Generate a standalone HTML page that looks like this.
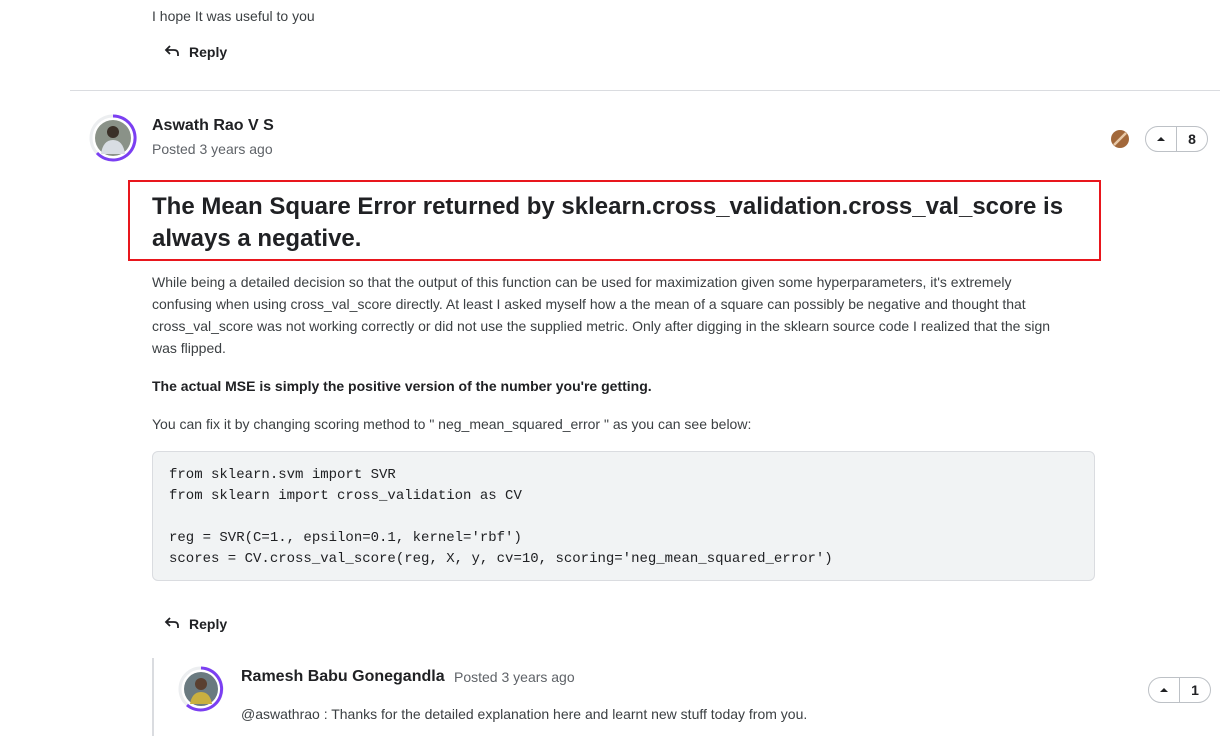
<!DOCTYPE html>
<html><head><style>
body{margin:0;width:1220px;height:736px;background:#fff;font-family:"Liberation Sans",sans-serif;color:#202124;position:relative;overflow:hidden}
.a{position:absolute;white-space:nowrap}
.t{font-size:14px;color:#3c4043}
.reply{font-size:14px;font-weight:bold;color:#202124}
.vote{position:absolute;border:1px solid #bdc1c6;border-radius:14px;height:24px;display:flex;align-items:center;font-size:14px;font-weight:bold}
.vote .u{width:30px;text-align:center;border-right:1px solid #bdc1c6;height:24px;display:flex;align-items:center;justify-content:center}
.vote .n{width:30px;text-align:center}
</style></head><body>
<div class="a t" style="left:152px;top:6px;line-height:20px">I hope It was useful to you</div>
<svg class="a" style="left:164px;top:44px" width="16" height="14" viewBox="0 0 16 14"><path d="M6 2 L2 6 L6 10 M2 6 H10 Q14 6 14 10 V12" fill="none" stroke="#202124" stroke-width="1.8"/></svg>
<div class="a reply" style="left:189px;top:43px;line-height:18px">Reply</div>
<div class="a" style="left:70px;top:90px;width:1150px;height:1px;background:#dadce0"></div>

<svg class="a" style="left:89px;top:114px" width="48" height="48" viewBox="0 0 48 48"><circle cx="24" cy="24" r="22" fill="none" stroke="#eceef0" stroke-width="3"/><path d="M24 2 A22 22 0 1 1 8 39" fill="none" stroke="#7b3ff2" stroke-width="3"/><circle cx="24" cy="24" r="18" fill="#8a9288"/><circle cx="24" cy="18" r="6" fill="#3a3028"/><path d="M12 40 Q14 26 24 26 Q34 26 36 40Z" fill="#d8dde3"/></svg>
<div class="a" style="left:152px;top:116px;font-size:16px;font-weight:bold;line-height:20px">Aswath Rao V S</div>
<div class="a" style="left:152px;top:140px;font-size:14px;color:#5f6368;line-height:18px">Posted 3 years ago</div>
<svg class="a" style="left:1110px;top:129px" width="20" height="20"><circle cx="10" cy="10" r="9" fill="#a2683a"/><path d="M4 16 L16 4" stroke="#e8c9a8" stroke-width="2.5"/></svg>
<div class="vote" style="left:1145px;top:126px"><div class="u"><svg width="10" height="6"><path d="M1 5 L5 1 L9 5Z" fill="#202124"/></svg></div><div class="n">8</div></div>

<div class="a" style="left:128px;top:180px;width:969px;height:77px;border:2px solid #e8161d"></div>
<div class="a" style="left:152px;top:191px;font-size:24px;font-weight:bold;line-height:32px;white-space:normal;width:940px">The Mean Square Error returned by sklearn.cross_validation.cross_val_score is always a negative.</div>

<div class="a t" style="left:152px;top:271px;line-height:22px;white-space:normal;width:905px">While being a detailed decision so that the output of this function can be used for maximization given some hyperparameters, it's extremely confusing when using cross_val_score directly. At least I asked myself how a the mean of a square can possibly be negative and thought that cross_val_score was not working correctly or did not use the supplied metric. Only after digging in the sklearn source code I realized that the sign was flipped.</div>
<div class="a" style="left:152px;top:375px;font-size:14px;font-weight:bold;line-height:22px">The actual MSE is simply the positive version of the number you're getting.</div>
<div class="a t" style="left:152px;top:413px;line-height:22px">You can fix it by changing scoring method to " neg_mean_squared_error " as you can see below:</div>
<div class="a" style="left:152px;top:451px;width:941px;height:128px;background:#f1f3f4;border:1px solid #dadce0;border-radius:6px"></div>
<pre class="a" style="left:169px;top:465px;margin:0;font-family:'Liberation Mono',monospace;font-size:14px;line-height:21px;color:#202124;white-space:pre">from sklearn.svm import SVR
from sklearn import cross_validation as CV

reg = SVR(C=1., epsilon=0.1, kernel='rbf')
scores = CV.cross_val_score(reg, X, y, cv=10, scoring='neg_mean_squared_error')</pre>

<svg class="a" style="left:164px;top:616px" width="16" height="14" viewBox="0 0 16 14"><path d="M6 2 L2 6 L6 10 M2 6 H10 Q14 6 14 10 V12" fill="none" stroke="#202124" stroke-width="1.8"/></svg>
<div class="a reply" style="left:189px;top:615px;line-height:18px">Reply</div>

<div class="a" style="left:152px;top:658px;width:2px;height:78px;background:#dadce0"></div>
<svg class="a" style="left:178px;top:666px" width="46" height="46" viewBox="0 0 46 46"><circle cx="23" cy="23" r="21" fill="none" stroke="#eceef0" stroke-width="3"/><path d="M23 2 A21 21 0 1 1 9 39" fill="none" stroke="#7b3ff2" stroke-width="3"/><circle cx="23" cy="23" r="17" fill="#6a7a80"/><circle cx="23" cy="18" r="6" fill="#5a4030"/><path d="M12 38 Q14 26 23 26 Q32 26 34 38Z" fill="#c9b040"/></svg>
<div class="a" style="left:241px;top:667px;font-size:16px;font-weight:bold;line-height:20px">Ramesh Babu Gonegandla</div>
<div class="a" style="left:454px;top:668px;font-size:14px;color:#5f6368;line-height:18px">Posted 3 years ago</div>
<div class="vote" style="left:1148px;top:677px"><div class="u"><svg width="10" height="6"><path d="M1 5 L5 1 L9 5Z" fill="#202124"/></svg></div><div class="n">1</div></div>
<div class="a t" style="left:241px;top:703px;line-height:22px">@aswathrao : Thanks for the detailed explanation here and learnt new stuff today from you.</div>
</body></html>
